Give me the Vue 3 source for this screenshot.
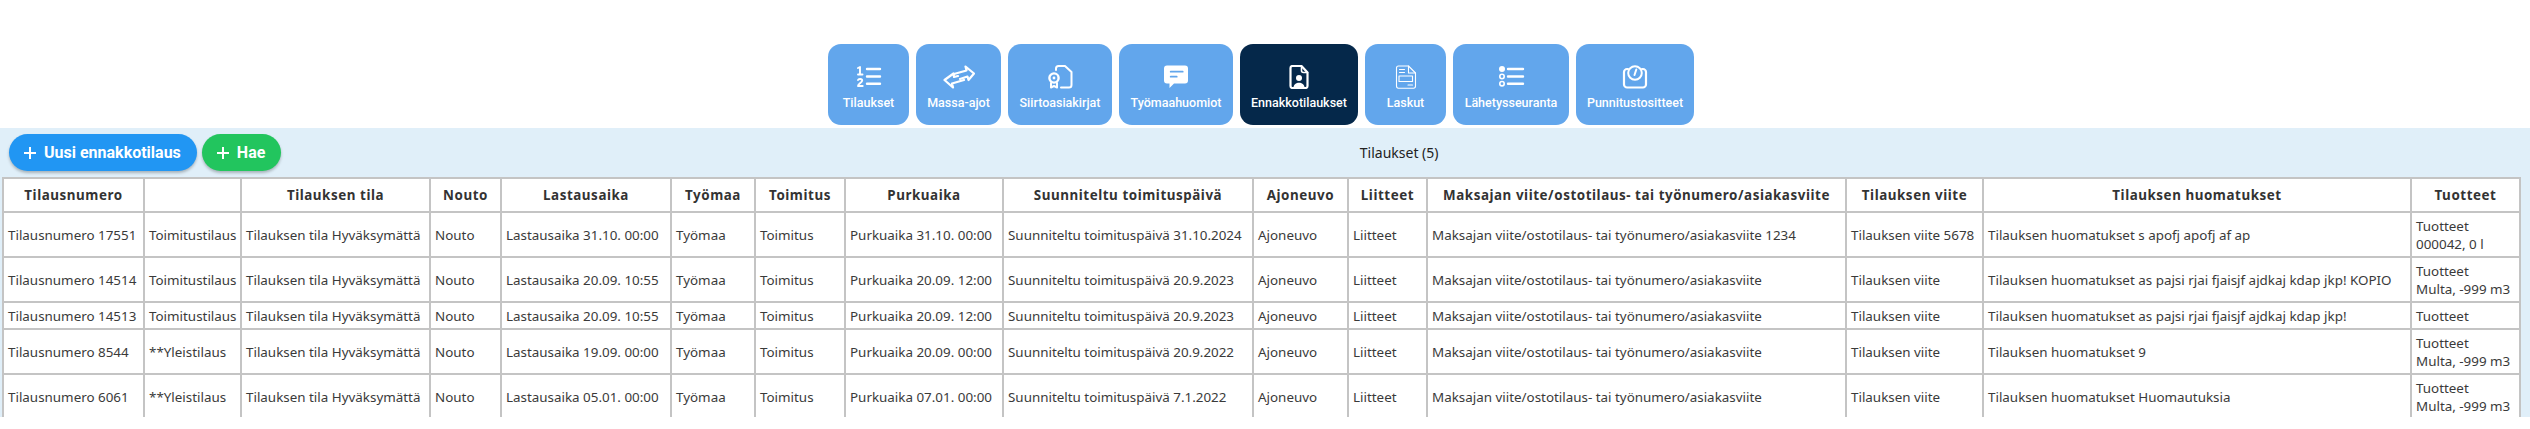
<script setup>
const navItems = [
  { label: 'Tilaukset', w: 81, icon: 'ol' },
  { label: 'Massa-ajot', w: 85, icon: 'swap' },
  { label: 'Siirtoasiakirjat', w: 104, icon: 'cert' },
  { label: 'Työmaahuomiot', w: 114, icon: 'note' },
  { label: 'Ennakkotilaukset', w: 118, icon: 'person', active: true },
  { label: 'Laskut', w: 81, icon: 'invoice' },
  { label: 'Lähetysseuranta', w: 116, icon: 'track' },
  { label: 'Punnitustositteet', w: 118, icon: 'scale' }
]
const columns = [
  ['Tilausnumero', 141], ['', 97], ['Tilauksen tila', 189], ['Nouto', 71], ['Lastausaika', 170],
  ['Työmaa', 84], ['Toimitus', 90], ['Purkuaika', 158], ['Suunniteltu toimituspäivä', 250],
  ['Ajoneuvo', 95], ['Liitteet', 79], ['Maksajan viite/ostotilaus- tai työnumero/asiakasviite', 419],
  ['Tilauksen viite', 137], ['Tilauksen huomatukset', 428], ['Tuotteet', 109]
]
const rows = [
  { no: '17551', type: 'Toimitustilaus', load: '31.10. 00:00', un: '31.10. 00:00', plan: '31.10.2024', payer: ' 1234', ref: ' 5678', note: ' s apofj apofj af ap', prod: '000042, 0 l' },
  { no: '14514', type: 'Toimitustilaus', load: '20.09. 10:55', un: '20.09. 12:00', plan: '20.9.2023', payer: '', ref: '', note: ' as pajsi rjai fjaisjf ajdkaj kdap jkp! KOPIO', prod: 'Multa, -999 m3' },
  { no: '14513', type: 'Toimitustilaus', load: '20.09. 10:55', un: '20.09. 12:00', plan: '20.9.2023', payer: '', ref: '', note: ' as pajsi rjai fjaisjf ajdkaj kdap jkp!', prod: '' },
  { no: '8544', type: '**Yleistilaus', load: '19.09. 00:00', un: '20.09. 00:00', plan: '20.9.2022', payer: '', ref: '', note: ' 9', prod: 'Multa, -999 m3' },
  { no: '6061', type: '**Yleistilaus', load: '05.01. 00:00', un: '07.01. 00:00', plan: '7.1.2022', payer: '', ref: '', note: ' Huomautuksia', prod: 'Multa, -999 m3' }
]
</script>

<template>
  <div class="page">
    <nav class="nav">
      <a v-for="item in navItems" :key="item.label" class="nav-item" :class="{ active: item.active }" :style="{ width: item.w + 'px' }">
        <svg class="nav-icon" width="32" height="24" viewBox="0 0 32 24" fill="none" stroke="#fff" stroke-width="2" stroke-linecap="round" stroke-linejoin="round">
          <template v-if="item.icon === 'ol'">
            <path d="M5 3 7 2v7M5 9.500h4.500M5 15c.5-1.500 4.200-1.500 4.200.5 0 2-4.200 3-4.200 5.500h4.700" stroke-width="1.900" />
            <path d="M14 4h13M14 11.500h13M14 18.700h13" stroke-width="2.400" />
          </template>
          <template v-else-if="item.icon === 'swap'">
            <g stroke-width="2.200">
              <path d="M11 9 23.500 5.500 22.500 1.500 31 8.500 25.500 15 24.500 11.500 17 14" />
              <path d="M21 15 9 18.500 10 22.500 1.500 15 10.500 8.500 11 12 15 11" />
            </g>
          </template>
          <template v-else-if="item.icon === 'cert'">
            <path d="M12 5V3.500C12 2 13 1 14.500 1H21l6.500 6v13c0 1.500-1 2.500-2.500 2.500h-8" stroke-width="2" />
            <circle cx="10" cy="13" r="4.600" stroke-width="2.400" />
            <circle cx="10" cy="13" r="1.400" fill="#fff" stroke="none" />
            <path d="M7 18v4.500l3-1.500 3 1.500V18" stroke-width="2" />
          </template>
          <template v-else-if="item.icon === 'note'">
            <path d="M7 .5h18c2 0 3 1 3 3v12c0 2-1 3-3 3H14L9.500 23V18.500H7c-2 0-3-1-3-3v-12c0-2 1-3 3-3z" fill="#fff" stroke="none" />
            <path d="M10.700 6.700h12M10.700 11.700h6" stroke="#62a6ec" stroke-width="1.800" />
          </template>
          <template v-else-if="item.icon === 'person'">
            <path d="M7.500 3c0-1 1-2 2-2h9l6 6.500V21c0 1.200-1 2-2 2h-13c-1 0-2-.8-2-2z" stroke-width="2.200" />
            <path d="M18.500 1.500v4c0 1 1 2 2 2h4" stroke-width="1.600" />
            <circle cx="16" cy="13" r="3" fill="#fff" stroke="none" />
            <path d="M10.500 22.500c0-6.500 11-6.500 11 0z" fill="#fff" stroke="none" />
          </template>
          <template v-else-if="item.icon === 'invoice'">
            <g stroke-width="1.100">
              <path d="M6.500 3c0-1.200 1-2 2-2h10l7 7v13c0 1.300-1 2.200-2 2.200h-15c-1 0-2-.9-2-2.200z" />
              <path d="M18.500 1v7h7" />
              <path d="M9.500 4.500h5M9.500 7.500h5" />
              <rect x="9" y="11" width="13.500" height="5.500" />
              <path d="M18 20h4.500" />
            </g>
          </template>
          <template v-else-if="item.icon === 'track'">
            <circle cx="7" cy="4" r="3" fill="#fff" stroke="none" />
            <circle cx="7" cy="11.500" r="2.200" stroke-width="1.600" />
            <circle cx="7" cy="18.700" r="2.200" stroke-width="1.600" />
            <path d="M13 4h15M13 11.500h15M13 18.700h15" stroke-width="2.400" />
          </template>
          <template v-else-if="item.icon === 'scale'">
            <path d="M9 4H8C6.500 4 5 5.500 5 7v12.500C5 21 6.500 22.500 8 22.500h16c1.500 0 3-1.500 3-3V7c0-1.500-1.500-3-3-3h-1" stroke-width="2.200" />
            <circle cx="16" cy="8" r="6.800" stroke-width="2" />
            <path d="M17.300 4.500 15.500 10" stroke-width="2" />
          </template>
        </svg>
        <span class="nav-label">{{ item.label }}</span>
      </a>
    </nav>

    <section class="panel">
      <div class="toolbar">
        <div class="actions">
          <button class="btn btn-blue">
            <svg width="12" height="12" viewBox="0 0 12 12" stroke="#fff" stroke-width="2"><path d="M6 0v12M0 6h12" /></svg>
            Uusi ennakkotilaus
          </button>
          <button class="btn btn-green">
            <svg width="12" height="12" viewBox="0 0 12 12" stroke="#fff" stroke-width="2"><path d="M6 0v12M0 6h12" /></svg>
            Hae
          </button>
        </div>
        <div class="title">Tilaukset (5)</div>
      </div>
      <table class="orders">
        <colgroup>
          <col v-for="c in columns" :key="c[0]" :style="{ width: c[1] + 'px' }" />
        </colgroup>
        <thead>
          <tr><th v-for="c in columns" :key="c[0]">{{ c[0] }}</th></tr>
        </thead>
        <tbody>
          <tr v-for="r in rows" :key="r.no">
            <td>Tilausnumero {{ r.no }}</td>
            <td>{{ r.type }}</td>
            <td>Tilauksen tila Hyväksymättä</td>
            <td>Nouto</td>
            <td>Lastausaika {{ r.load }}</td>
            <td>Työmaa</td>
            <td>Toimitus</td>
            <td>Purkuaika {{ r.un }}</td>
            <td>Suunniteltu toimituspäivä {{ r.plan }}</td>
            <td>Ajoneuvo</td>
            <td>Liitteet</td>
            <td>Maksajan viite/ostotilaus- tai työnumero/asiakasviite{{ r.payer }}</td>
            <td>Tilauksen viite{{ r.ref }}</td>
            <td>Tilauksen huomatukset{{ r.note }}</td>
            <td>Tuotteet<template v-if="r.prod"><br />{{ r.prod }}</template></td>
          </tr>
        </tbody>
      </table>
    </section>
  </div>
</template>

<style scoped>
.page {
  width: 2530px;
  height: 429px;
  overflow: hidden;
  background: #fff;
  font-family: "Noto Sans", "DejaVu Sans", sans-serif;
}
.nav {
  display: flex;
  justify-content: center;
  gap: 7px;
  padding: 44px 8px 3px 0;
}
.nav-item {
  box-sizing: border-box;
  height: 81px;
  padding-top: 21px;
  display: flex;
  flex-direction: column;
  align-items: center;
  background: #62a6ec;
  border-radius: 13px;
  color: #fff;
}
.nav-item.active { background: #05284a; }
.nav-label {
  margin-top: 6px;
  font-family: Roboto, sans-serif;
  font-size: 12.500px;
  font-weight: 500;
  line-height: 16px;
  white-space: nowrap;
}
.panel {
  background: #e0eff9;
  padding: 0 9px 0 2px;
  height: 289px;
  overflow: hidden;
}
.toolbar {
  display: flex;
  align-items: center;
  height: 49px;
  padding-right: 4px;
}
.actions {
  display: flex;
  gap: 5px;
  padding-left: 7px;
}
.btn {
  height: 37px;
  border: 0;
  border-radius: 19px;
  padding: 0 16px 0 15px;
  display: flex;
  align-items: center;
  gap: 8px;
  color: #fff;
  font-family: Roboto, sans-serif;
  font-size: 16px;
  font-weight: 700;
  white-space: nowrap;
  box-shadow: 0 2px 3px rgba(0, 0, 0, 0.25);
}
.btn-blue { background: #2196f3; }
.btn-green { background: #22c55e; }
.title {
  flex: 1;
  text-align: center;
  font-size: 14px;
  color: #222;
}
.orders {
  table-layout: fixed;
  width: 2518px;
  border-collapse: collapse;
  background: #fff;
  color: #3a3a3a;
  font-size: 13.400px;
  line-height: 18px;
}
th, td {
  border: 2px solid #c4c4c4;
  overflow: hidden;
}
th {
  padding: 7px 4px;
  font-weight: 700;
  letter-spacing: 0.550px;
  text-align: center;
  white-space: nowrap;
  color: #333;
}
td {
  padding: 3.500px 4px;
  text-align: left;
}
</style>
